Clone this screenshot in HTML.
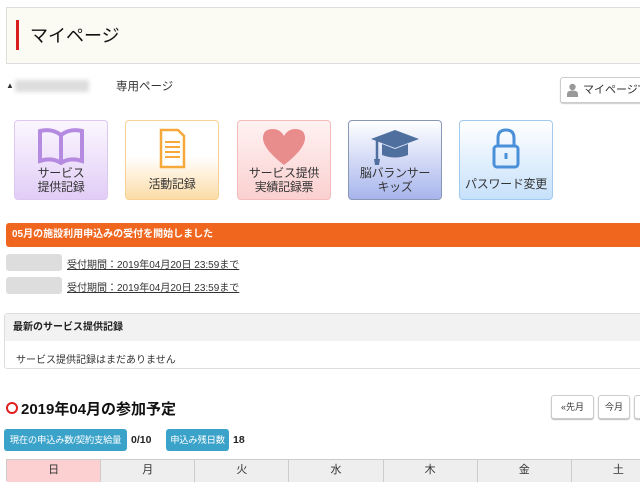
<!DOCTYPE html>
<html><head><meta charset="utf-8"><style>
*{margin:0;padding:0;box-sizing:border-box}
body{width:640px;height:480px;overflow:hidden;background:#fff;font-family:"Liberation Sans","Noto Sans CJK JP",sans-serif;color:#333;position:relative}
.a{position:absolute}
.hdr{left:6px;top:7px;width:650px;height:57px;background:#fbfaf3;border:1px solid #ddd}
.bar{left:16px;top:20px;width:3px;height:30px;background:#d81e1e}
.ttl{left:30px;top:22px;font-size:18px;color:#111}
.tile{position:absolute;top:120px;width:94px;height:80px;border-radius:4px;text-align:center;font-size:12px;line-height:14px;color:#333}
.tile svg{position:absolute;left:50%;transform:translateX(-50%);top:6px}
.tile .l{position:absolute;left:0;right:0;bottom:5px;white-space:nowrap;letter-spacing:-0.3px}
.orange{left:6px;top:223px;width:640px;height:24px;background:#f0661f;border-radius:3px 0 0 3px;color:#fff;font-weight:bold;font-size:10px;line-height:24px;padding-left:6px}
.pill{position:absolute;left:6px;width:56px;height:17px;background:#ddd;border-radius:3px}
.lnk{position:absolute;left:67px;font-size:10px;text-decoration:underline;color:#333;white-space:nowrap}
.box{left:4px;top:313px;width:650px;height:56px;border:1px solid #ddd;border-radius:3px}
.boxh{height:27px;background:#f2f2f2;font-size:10px;font-weight:bold;line-height:27px;padding-left:8px;color:#222}
.btn{position:absolute;top:395px;height:24px;border:1px solid #ccc;border-radius:3px;background:#fff;box-shadow:0 1px 1px #bbb;font-size:9px;line-height:22px;text-align:center}
.bd{position:absolute;top:429px;height:22px;background:#3ba3c9;color:#fff;border-radius:3px;font-size:9.3px;line-height:22px;text-align:center;white-space:nowrap;overflow:hidden;letter-spacing:-0.2px}
.num{position:absolute;top:434px;font-size:10.5px;font-weight:bold;color:#222}
.cal{left:6px;top:459px;width:660px;height:22px;display:flex;border-top:1px solid #ccc;border-left:1px solid #ccc}
.cal div{width:95px;height:22px;background:#eee;border-right:1px solid #ccc;text-align:center;font-size:11px;line-height:20px}
</style></head><body>
<div class="a hdr"></div><div class="a bar"></div><div class="a ttl">マイページ</div>
<div class="a" style="left:6px;top:81px;font-size:8px">▲</div>
<div class="a" style="left:15px;top:80px;width:74px;height:12px;background:#ddd;filter:blur(2px)"></div>
<div class="a" style="left:116px;top:78px;font-size:11.5px">専用ページ</div>
<div class="a" style="left:560px;top:77px;width:90px;height:26px;border:1px solid #ccc;border-radius:3px;background:#fff;box-shadow:0 1px 1px #ccc;font-size:11px;line-height:24px;padding-left:22px;white-space:nowrap">マイページT</div>
<svg class="a" style="left:567px;top:83px" width="11" height="14"><circle cx="5.5" cy="4" r="3.2" fill="#999"/><path d="M0 14v-3q0-3.5 5.5-3.5T11 11v3z" fill="#999"/></svg>

<div class="tile" style="left:14px;border:1px solid #dcc8f0;background:linear-gradient(#fbf7ff,#e2cdf6)">
<svg width="54" height="38" viewBox="0 0 54 38"><path d="M27 8Q18 1 6 4V34Q18 30 27 36Q36 30 48 34V4Q36 1 27 8Z M27 8V36" fill="none" stroke="#b48be0" stroke-width="4"/></svg><div class="l">サービス<br>提供記録</div></div>
<div class="tile" style="left:125px;border:1px solid #f8d195;background:linear-gradient(#fff,#fff 45%,#fcdca7)">
<svg width="34" height="44" viewBox="0 0 34 44"><path d="M6 3H23L29 9V40H6Z" fill="#fff" stroke="#f6a93a" stroke-width="2.5"/><path d="M10 15H25M10 20H25M10 25H25M10 30H25" stroke="#f6a93a" stroke-width="2"/></svg><div class="l" style="bottom:8px">活動記録</div></div>
<div class="tile" style="left:237px;border:1px solid #f5bcbc;background:linear-gradient(#fff2f2,#fbd0d0)">
<svg width="46" height="40" viewBox="0 0 46 40"><path d="M23 38Q2 22 2 11Q2 2 12 2Q19 2 23 9Q27 2 34 2Q44 2 44 11Q44 22 23 38Z" fill="#e88c8c"/></svg><div class="l">サービス提供<br>実績記録票</div></div>
<div class="tile" style="left:348px;border:1px solid #8a98b8;background:linear-gradient(#fff,#a7b5ec)">
<svg width="52" height="40" viewBox="0 0 52 40"><path d="M2 12L26 3L50 12L26 21Z" fill="#4f6f9e"/><path d="M13 17V28Q26 33 39 28V17L26 22Z" fill="#4f6f9e"/><path d="M8 14V32" stroke="#4f6f9e" stroke-width="2.5"/><path d="M5 32H11L10 38H6Z" fill="#4f6f9e"/></svg><div class="l">脳バランサー<br>キッズ</div></div>
<div class="tile" style="left:459px;border:1px solid #a2c9ef;background:linear-gradient(#fff,#c7e1fb)">
<svg width="36" height="44" viewBox="0 0 36 44"><path d="M10 19V11Q10 3 18 3Q26 3 26 11V19" fill="none" stroke="#4a90d9" stroke-width="3"/><rect x="6" y="19" width="24" height="21" rx="3" fill="none" stroke="#4a90d9" stroke-width="3"/><path d="M18 26V32" stroke="#4a90d9" stroke-width="3"/></svg><div class="l" style="bottom:8px">パスワード変更</div></div>

<div class="a orange">05月の施設利用申込みの受付を開始しました</div>
<div class="pill" style="top:254px"></div><div class="lnk" style="top:256px">受付期間：2019年04月20日 23:59まで</div>
<div class="pill" style="top:277px"></div><div class="lnk" style="top:279px">受付期間：2019年04月20日 23:59まで</div>

<div class="a box"><div class="boxh">最新のサービス提供記録</div><div style="font-size:10px;padding:10px 0 0 11px">サービス提供記録はまだありません</div></div>

<div class="a" style="left:6px;top:402px;width:12px;height:12px;border:2.5px solid #e01e1e;border-radius:50%"></div>
<div class="a" style="left:21px;top:398px;font-size:15px;font-weight:bold;color:#111">2019年04月の参加予定</div>
<div class="btn" style="left:551px;width:43px">«先月</div>
<div class="btn" style="left:598px;width:32px">今月</div>
<div class="btn" style="left:634px;width:30px"></div>

<div class="bd" style="left:4px;width:123px">現在の申込み数/契約支給量</div>
<div class="num" style="left:131px">0/10</div>
<div class="bd" style="left:166px;width:63px">申込み残日数</div>
<div class="num" style="left:233px">18</div>

<div class="a cal"><div style="background:#fcd0d0">日</div><div>月</div><div>火</div><div>水</div><div>木</div><div>金</div><div>土</div></div>
</body></html>
